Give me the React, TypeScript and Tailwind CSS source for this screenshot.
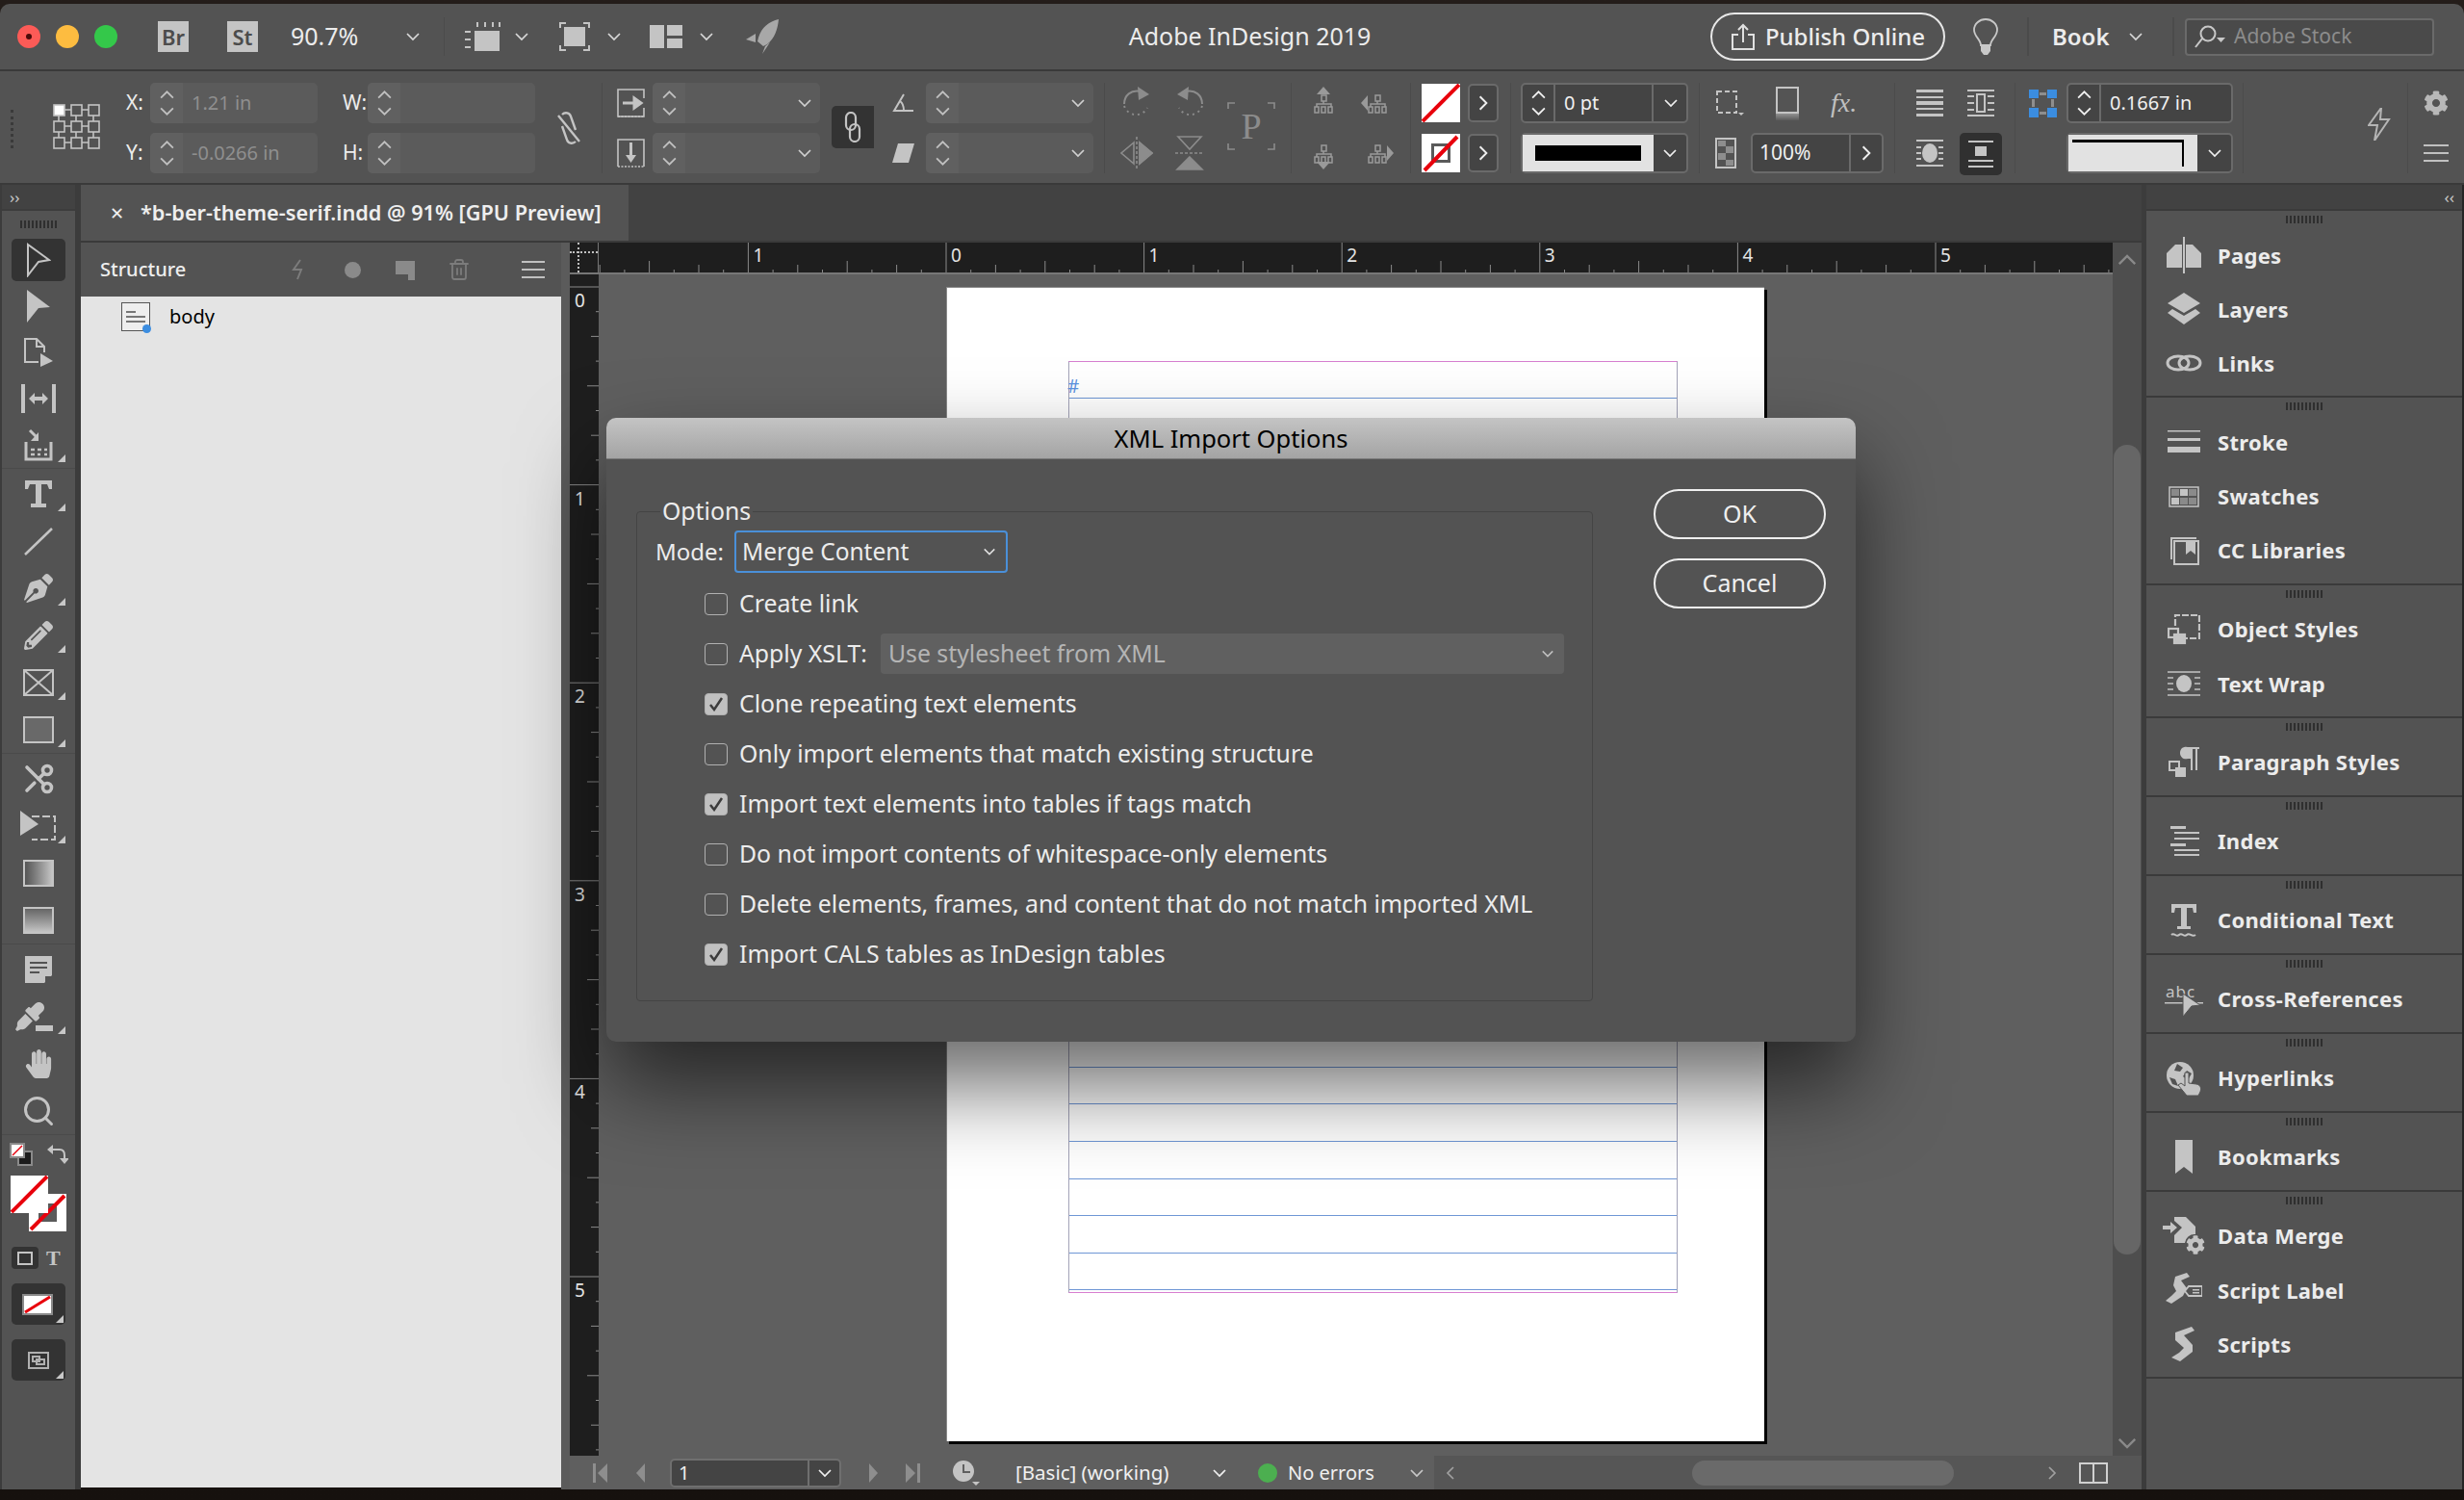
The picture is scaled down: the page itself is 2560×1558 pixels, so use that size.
import React from "react";
import { FaPenNib, FaPencilAlt, FaHandPaper, FaEyeDropper, FaCog } from "react-icons/fa";
import { Scissors, Search, Trash2 } from "lucide-react";

const C = "#c4c4c4";

const Chev = ({ dir = "down", size = 16, color = "#d8d8d8" }: { dir?: string; size?: number; color?: string }) => {
  const pts: Record<string, string> = { down: "2,5 8,11 14,5", up: "2,11 8,5 14,11", right: "5,2 11,8 5,14", left: "11,2 5,8 11,14" };
  return (
    <svg width={size} height={size} viewBox="0 0 16 16" className="shrink-0">
      <polyline points={pts[dir]} fill="none" stroke={color} strokeWidth="1.7" />
    </svg>
  );
};

const Sep = ({ className = "" }: { className?: string }) => <div className={`w-px h-[94px] bg-[#4b4b4b] shrink-0 ${className}`} />;

const Grip = () => (
  <div className="flex justify-center gap-[2px]">
    {Array.from({ length: 10 }).map((_, i) => (
      <span key={i} className="w-[2px] h-[8px] bg-[#2f2f2f]" />
    ))}
  </div>
);

const Flyout = () => <span className="absolute right-[10px] bottom-[6px] w-0 h-0 border-l-[8px] border-l-transparent border-b-[8px] border-b-[#c8c8c8]" />;

const Slash = ({ w, h, sw = 4 }: { w: number; h: number; sw?: number }) => (
  <svg width={w} height={h} viewBox={`0 0 ${w} ${h}`} className="block">
    <rect width={w} height={h} fill="#fff" />
    <line x1="1" y1={h - 1} x2={w - 1} y2="1" stroke="#e8000c" strokeWidth={sw} />
  </svg>
);

// stepper + value field from the control bar
const Field = ({ value, chevron, dim = true, w = "w-[174px]" }: { value?: string; chevron?: boolean; dim?: boolean; w?: string }) => (
  <div className={`${w} h-[42px] rounded-[5px] flex items-center shrink-0 ${dim ? "bg-[#5b5b5b]" : "bg-[#444444] border-2 border-[#6a6a6a]"}`}>
    <div className={`w-[34px] h-full flex flex-col items-center justify-center shrink-0 ${dim ? "bg-[#606060] rounded-l-[5px]" : "border-r-2 border-[#6a6a6a]"}`}>
      <Chev dir="up" size={17} color={dim ? "#c0c0c0" : "#f0f0f0"} />
      <Chev dir="down" size={17} color={dim ? "#c0c0c0" : "#f0f0f0"} />
    </div>
    {value && <span className={`ml-[9px] text-[20px] ${dim ? "text-[#8f8f8f]" : "text-[#f0f0f0]"}`}>{value}</span>}
    {chevron && (
      <span className="ml-auto mr-[8px]">
        <Chev color="#d0d0d0" />
      </span>
    )}
  </div>
);

const FieldLabel = ({ children }: { children: React.ReactNode }) => <div className="h-[42px] flex items-center text-[21px] text-[#ececec]">{children}</div>;

const ArrowBox = () => (
  <div className="w-[32px] h-[40px] rounded-[5px] bg-[#444444] border-2 border-[#6a6a6a] flex items-center justify-center">
    <Chev dir="right" size={18} color="#f0f0f0" />
  </div>
);

const Box = ({ children, className = "" }: { children: React.ReactNode; className?: string }) => (
  <div className={`h-[42px] flex items-center justify-center [&>svg]:shrink-0 ${className}`}>{children}</div>
);

const Ref = () => (
  <svg width="50" height="50" viewBox="0 0 50 50">
    {[3, 20, 37].map((y) =>
      [1, 19, 37].map((x) => <rect key={`${x}${y}`} x={x} y={y} width="11" height="11" fill={x === 1 && y === 3 ? "#fff" : "none"} stroke={C} strokeWidth="1.6" />)
    )}
    <path d="M12 8h7M30 8h7M12 25h7M30 25h7M12 42h7M30 42h7M6 14v6M24 14v6M42 14v6M6 31v6M24 31v6M42 31v6" stroke={C} strokeWidth="1.6" />
  </svg>
);

const Org = ({ arrow }: { arrow: string }) => (
  <svg width="36" height="36" viewBox="0 0 36 36" fill="none" stroke="#9a9a9a" strokeWidth="1.5">
    {arrow === "up" && <path d="M18 1l-7 8h14z" fill="#9a9a9a" stroke="none" />}
    {arrow === "down" && <path d="M18 35l-7-8h14z" fill="#9a9a9a" stroke="none" />}
    {arrow === "left" && <path d="M1 18l7-8v16z" fill="#9a9a9a" stroke="none" />}
    {arrow === "right" && <path d="M35 18l-7-8v16z" fill="#9a9a9a" stroke="none" />}
    <rect x="16" y="10" width="5" height="6" />
    <path d="M18 16v3M11 22v-3h15v3" />
    <rect x="9" y="22" width="4" height="6" />
    <rect x="16" y="22" width="4" height="6" />
    <rect x="23" y="22" width="4" height="6" />
  </svg>
);

const TopBar = () => (
  <div className="h-[68px] flex items-center bg-[#535353] rounded-t-[10px] text-[#ececec]">
    <span className="ml-[18px] w-[24px] h-[24px] rounded-full bg-[#fc5b57] flex items-center justify-center">
      <span className="w-[6px] h-[6px] rounded-full bg-[#4a0c0a]" />
    </span>
    <span className="ml-[16px] w-[24px] h-[24px] rounded-full bg-[#fdbc40]" />
    <span className="ml-[16px] w-[24px] h-[24px] rounded-full bg-[#34c84a]" />
    <span className="ml-[42px] w-[32px] h-[32px] bg-[#c4c4c4] text-[#4c4c4c] text-[22px] font-semibold flex items-center justify-center">Br</span>
    <span className="ml-[40px] w-[32px] h-[32px] bg-[#c4c4c4] text-[#4c4c4c] text-[22px] font-semibold flex items-center justify-center">St</span>
    <span className="ml-[34px] w-[70px] text-[25px] whitespace-nowrap">90.7%</span>
    <span className="ml-[49px]"><Chev /></span>
    <div className="ml-[24px] w-px h-[40px] bg-[#4b4b4b]" />
    <svg className="ml-[21px]" width="38" height="30" viewBox="0 0 38 30" fill={C}>
      <rect x="10" y="9" width="26" height="21" />
      <path d="M0 9h6v2H0zM0 17h6v2H0zM0 25h6v2H0zM12 0h2v5h-2zM20 0h2v5h-2zM28 0h2v5h-2zM35 0h2v5h-2z" />
    </svg>
    <span className="ml-[13px]"><Chev /></span>
    <svg className="ml-[31px]" width="32" height="30" viewBox="0 0 32 30" fill="none" stroke={C} strokeWidth="2">
      <path d="M1 6V1h6M25 1h6v5M31 24v5h-6M7 29H1v-5" />
      <rect x="5" y="5" width="22" height="20" fill={C} stroke="none" />
    </svg>
    <span className="ml-[17px]"><Chev /></span>
    <svg className="ml-[29px]" width="34" height="24" viewBox="0 0 34 24" fill={C}>
      <path d="M0 0h15v24H0zM18 0h16v11H18zM18 14h16v10H18z" />
    </svg>
    <span className="ml-[17px]"><Chev /></span>
    <svg className="ml-[33px]" width="34" height="36" viewBox="0 0 34 36" fill="#a8a8a8">
      <path d="M34 0C24 2 16 9 13 19l-1 4 6 5 4-2C30 20 33 10 34 0zM10 15L0 21l10 3zM20 28l-3 8 8-12z" />
    </svg>
    <span className="ml-[363px] w-[253px] text-[25px] whitespace-nowrap text-center">Adobe InDesign 2019</span>
    <div className="ml-[352px] w-[244px] h-[50px] rounded-full border-2 border-[#e8e8e8] flex items-center justify-center gap-[10px] shrink-0">
      <svg width="26" height="28" viewBox="0 0 26 28" fill="none" stroke="#e0e0e0" strokeWidth="2">
        <path d="M8 12H2v15h22V12h-6M13 20V3M8 7l5-5 5 5" />
      </svg>
      <span className="text-[24px] font-medium whitespace-nowrap">Publish Online</span>
    </div>
    <svg className="ml-[29px] shrink-0" width="26" height="38" viewBox="0 0 26 38" fill="none" stroke="#c8c8c8" strokeWidth="1.800">
      <path d="M8 28C8 22 1 19 1 12a12 11 0 0124 0c0 7-7 10-7 16z" />
      <path d="M8 29h10v5l-3 4h-4l-3-4z" fill="#c8c8c8" stroke="none" />
    </svg>
    <div className="ml-[30px] w-[2px] h-[40px] bg-[#4b4b4b]" />
    <span className="ml-[24px] w-[61px] text-[24px] font-semibold">Book</span>
    <span className="ml-[18px]"><Chev /></span>
    <div className="ml-[30px] w-[2px] h-[40px] bg-[#4b4b4b]" />
    <div className="ml-[11px] w-[259px] h-[39px] rounded-[4px] border-2 border-[#6a6a6a] bg-[#4a4a4a] flex items-center pl-[7px] gap-[8px] shrink-0">
      <svg width="34" height="26" viewBox="0 0 34 26" fill="none" stroke="#c8c8c8" strokeWidth="2">
        <circle cx="15" cy="10" r="7.5" />
        <path d="M9 15l-7 9" />
        <path d="M24 14h9l-4.500 5z" fill="#c8c8c8" stroke="none" />
      </svg>
      <span className="text-[21px] text-[#8c8c8c] whitespace-nowrap">Adobe Stock</span>
    </div>
  </div>
);

const ControlBar = () => (
  <div className="h-[118px] flex items-start pt-[12px] bg-[#535353] border-b-2 border-[#3a3a3a] shrink-0">
    <div className="ml-[11px] mt-[28px] w-[3px] h-[40px] border-l-[3px] border-dotted border-[#3a3a3a]" />
    <div className="ml-[41px] mt-[20px] w-[50px] shrink-0"><Ref /></div>

    <div className="ml-[26px] w-[25px] flex flex-col gap-[10px]">
      <FieldLabel>X:</FieldLabel>
      <FieldLabel>Y:</FieldLabel>
    </div>
    <div className="flex flex-col gap-[10px]">
      <Field value="1.21 in" />
      <Field value="-0.0266 in" />
    </div>
    <div className="ml-[26px] w-[26px] flex flex-col gap-[10px]">
      <FieldLabel>W:</FieldLabel>
      <FieldLabel>H:</FieldLabel>
    </div>
    <div className="flex flex-col gap-[10px]">
      <Field />
      <Field />
    </div>
    <svg className="ml-[20px] mt-[28px] shrink-0" width="30" height="38" viewBox="0 0 30 38" fill="none" stroke={C} strokeWidth="2.400">
      <path d="M8 5c3-3 8-2 9 2l5 14M22 33c-3 3-8 2-9-2L8 17M4 6l22 27" />
    </svg>
    <Sep className="ml-[19px]" />
    <div className="ml-[15px] w-[29px] flex flex-col gap-[10px]">
      <Box>
        <svg width="29" height="30" viewBox="0 0 29 30" fill="none" stroke={C} strokeWidth="1.600">
          <path d="M28 10V1H1v28h27v-9" />
          <path d="M1 29h27" strokeDasharray="2 1.500" />
          <path d="M6 15h12M18 10l7 5-7 5z" fill={C} strokeWidth="3" />
        </svg>
      </Box>
      <Box>
        <svg width="29" height="30" viewBox="0 0 29 30" fill="none" stroke={C} strokeWidth="1.600">
          <path d="M1 29V1h27v28" />
          <path d="M1 29h27" strokeDasharray="2 1.500" />
          <path d="M14.500 4v14" strokeWidth="3" />
          <path d="M9 17h11l-5.500 8z" fill={C} stroke="none" />
        </svg>
      </Box>
    </div>
    <div className="ml-[8px] flex flex-col gap-[10px]">
      <Field chevron />
      <Field chevron />
    </div>
    <div className="ml-[12px] mt-[24px] w-[44px] h-[44px] rounded-l-[5px] bg-[#333333] flex items-center justify-center shrink-0">
      <svg width="18" height="32" viewBox="0 0 18 32" fill="none" stroke={C} strokeWidth="2.200">
        <rect x="2" y="1" width="10" height="18" rx="5" />
        <rect x="6" y="13" width="10" height="18" rx="5" />
      </svg>
    </div>
    <div className="ml-[19px] w-[23px] flex flex-col gap-[10px]">
      <Box>
        <svg width="23" height="20" viewBox="0 0 23 20" fill="none" stroke={C} strokeWidth="2">
          <path d="M12 1L2 18h20M8 8c3 2 4 5 4 10" />
        </svg>
      </Box>
      <Box>
        <svg width="23" height="20" viewBox="0 0 23 20" fill={C}>
          <path d="M6 0h17l-6 20H0z" />
        </svg>
      </Box>
    </div>
    <div className="ml-[12px] flex flex-col gap-[10px]">
      <Field chevron />
      <Field chevron />
    </div>
    <Sep className="ml-[11px]" />
    <div className="ml-[19px] w-[83px] grid grid-cols-[28px_28px] gap-x-[27px] gap-y-[10px]">
      <Box>
        <svg width="34" height="34" viewBox="0 0 34 34" fill="none" stroke="#8c8c8c" strokeWidth="2">
          <path d="M4 18C4 9 11 3 21 5" />
          <path d="M4 20a13 13 0 0024 2" strokeDasharray="2 4" />
          <path d="M18 0l12 8-11 6z" fill="#8c8c8c" stroke="none" />
        </svg>
      </Box>
      <Box>
        <svg width="34" height="34" viewBox="0 0 34 34" fill="none" stroke="#8c8c8c" strokeWidth="2">
          <path d="M30 18C30 9 23 3 13 5" />
          <path d="M30 20a13 13 0 01-24 2" strokeDasharray="2 4" />
          <path d="M16 0L4 8l11 6z" fill="#8c8c8c" stroke="none" />
        </svg>
      </Box>
      <Box>
        <svg width="36" height="34" viewBox="0 0 36 34" fill="none" stroke="#8c8c8c" strokeWidth="1.600">
          <path d="M15 6L2 17l13 11zM21 6l13 11-13 11z" />
          <path d="M21 6l13 11-13 11z" fill="#8c8c8c" />
          <path d="M18 0v34" strokeDasharray="3 2" />
        </svg>
      </Box>
      <Box>
        <svg width="32" height="36" viewBox="0 0 32 36" fill="none" stroke="#8c8c8c" strokeWidth="1.600">
          <path d="M4 1h24L16 14z" />
          <path d="M1 18h30" strokeDasharray="3 2" />
          <path d="M16 22l13 13H3z" fill="#8c8c8c" />
        </svg>
      </Box>
    </div>
    <div className="ml-[25px] mt-[20px] w-[50px] h-[50px] relative flex items-center justify-center shrink-0">
      <svg className="absolute inset-0" width="50" height="50" viewBox="0 0 50 50" fill="none" stroke="#8c8c8c" strokeWidth="1.600">
        <path d="M1 7V1h7M42 1h7v6M49 43v6h-7M8 49H1v-6" />
      </svg>
      <span className="text-[38px] leading-none text-[#8c8c8c] font-['Liberation_Serif',serif]">P</span>
    </div>
    <Sep className="ml-[16px]" />
    <div className="ml-[15px] w-[92px] grid grid-cols-[36px_36px] gap-x-[20px] gap-y-[10px]">
      <Box><Org arrow="up" /></Box>
      <Box><Org arrow="left" /></Box>
      <Box><Org arrow="down" /></Box>
      <Box><Org arrow="right" /></Box>
    </div>
    <Sep className="ml-[16px]" />
    <div className="ml-[11px] w-[40px] flex flex-col gap-[12px] mt-[1px]">
      <Slash w={40} h={40} />
      <div className="relative w-[40px] h-[40px] bg-white">
        <span className="absolute left-[10px] top-[10px] w-[20px] h-[20px] border-[3px] border-[#5a5a5a]" />
        <svg className="absolute inset-0" width="40" height="40" viewBox="0 0 40 40"><line x1="3" y1="38" x2="37" y2="3" stroke="#e8000c" strokeWidth="4" /></svg>
      </div>
    </div>
    <div className="ml-[8px] flex flex-col gap-[12px] mt-[1px]">
      <ArrowBox />
      <ArrowBox />
    </div>
    <Sep className="ml-[12px]" />
    <div className="ml-[10px] flex flex-col gap-[10px]">
      <div className="relative">
        <Field value="0 pt" dim={false} />
        <div className="absolute right-0 top-0 w-[38px] h-[42px] border-l-2 border-[#6a6a6a] flex items-center justify-center">
          <Chev color="#f0f0f0" />
        </div>
      </div>
      <div className="w-[174px] h-[42px] flex rounded-[5px] border-2 border-[#6a6a6a] bg-[#444444]">
        <div className="w-[136px] bg-[#e2e2e2] flex items-center justify-center">
          <span className="w-[110px] h-[16px] bg-black" />
        </div>
        <div className="flex-1 flex items-center justify-center"><Chev color="#f0f0f0" /></div>
      </div>
    </div>
    <Sep className="ml-[11px]" />
    <div className="w-[202px] flex flex-col gap-[10px] shrink-0">
      <div className="h-[42px] flex items-center pl-[16px]">
        <svg width="30" height="28" viewBox="0 0 30 28" fill="none" stroke={C} strokeWidth="2">
          <path d="M2 2h20v22H2z" strokeDasharray="5 3" />
          <path d="M24 24h6l-3 3z" fill={C} stroke="none" />
        </svg>
        <svg className="ml-[30px]" width="30" height="36" viewBox="0 0 30 36">
          <defs>
            <linearGradient id="drop" x1="0" y1="0" x2="0" y2="1">
              <stop offset="0" stopColor="#aaa" />
              <stop offset="1" stopColor="#5a5a5a" />
            </linearGradient>
          </defs>
          <rect x="3" y="26" width="24" height="10" fill="url(#drop)" />
          <rect x="4" y="2" width="22" height="26" fill="#545454" stroke={C} strokeWidth="2" />
        </svg>
        <span className="ml-[30px] text-[28px] italic text-[#c0c0c0] font-['Liberation_Serif',serif] leading-none">fx.</span>
      </div>
      <div className="h-[42px] flex items-center pl-[16px]">
        <svg width="22" height="32" viewBox="0 0 22 32" fill={C}>
          <rect x="1" y="1" width="20" height="30" fill="none" stroke={C} strokeWidth="2" />
          <path d="M3 3h8v6H3zM11 9h8v7h-8zM3 16h8v7H3zM11 23h8v6h-8z" fill="#8e8e8e" />
        </svg>
        <div className="ml-[15px] w-[138px] h-[42px] rounded-[5px] bg-[#444444] border-2 border-[#6a6a6a] flex items-center">
          <span className="pl-[7px] w-[100px] text-[21px] text-[#f0f0f0]">100%</span>
          <span className="flex-1 h-full border-l-2 border-[#6a6a6a] flex items-center justify-center"><Chev dir="right" size={18} color="#f0f0f0" /></span>
        </div>
      </div>
    </div>
    <Sep />
    <div className="ml-[14px] grid grid-cols-[44px_44px] gap-x-[9px] gap-y-[10px] shrink-0">
      <Box>
        <svg width="30" height="28" viewBox="0 0 30 28" fill={C}><path d="M1 0h28v3H1zM1 25h28v3H1z" /><path d="M1 7h28v2H1zM1 12h28v4H1zM1 19h28v2H1z" /></svg>
      </Box>
      <Box>
        <svg width="30" height="28" viewBox="0 0 30 28" fill="none" stroke={C} strokeWidth="2"><path d="M1 1h28M1 27h28M1 7h7M22 7h7M1 14h7M22 14h7M1 21h7M22 21h7" /><rect x="11" y="5" width="8" height="18" /></svg>
      </Box>
      <Box>
        <svg width="30" height="28" viewBox="0 0 30 28" fill={C}><path d="M1 1h28M1 27h28M1 8h5M24 8h5M1 14h5M24 14h5M1 20h5M24 20h5" stroke={C} strokeWidth="2" /><ellipse cx="15" cy="14" rx="8" ry="10" /></svg>
      </Box>
      <div className="h-[44px] rounded-[5px] bg-[#303030] flex items-center justify-center">
        <svg width="28" height="28" viewBox="0 0 28 28" fill={C}><path d="M1 0h26v2H1zM8 6h12v10H8zM1 20h26v2H1zM1 26h26v2H1z" /></svg>
      </div>
    </div>
    <Sep className="ml-[13px]" />
    <div className="ml-[14px] w-[29px] h-[42px] flex items-center shrink-0">
      <svg width="29" height="29" viewBox="0 0 29 29" fill="#8e8e8e">
        <path d="M0 0h10v9H0zM19 0h10v9H19zM0 19h10v10H0zM19 19h10v10H19z" fill="#3b8de0" />
        <path d="M11 3h7v3h-7zM11 23h7v3h-7zM3 10h3v8H3zM23 10h3v8h-3z" />
      </svg>
    </div>
    <div className="ml-[10px] flex flex-col gap-[10px]">
      <Field value="0.1667 in" dim={false} w="w-[173px]" />
      <div className="w-[173px] h-[42px] flex rounded-[5px] border-2 border-[#6a6a6a] bg-[#444444]">
        <div className="w-[134px] bg-[#e2e2e2] relative">
          <span className="absolute left-[4px] right-[14px] top-[5px] h-[3px] bg-black" />
          <span className="absolute right-[14px] top-[5px] bottom-[5px] w-[2px] bg-black" />
        </div>
        <div className="flex-1 flex items-center justify-center"><Chev color="#f0f0f0" /></div>
      </div>
    </div>
    <Sep className="ml-[10px]" />
    <svg className="ml-[129px] mt-[26px] shrink-0" width="24" height="34" viewBox="0 0 24 34" fill="#b5b5b5">
      <path d="M14 0L1 18h9l-3 16 15-22h-9z" fill="none" stroke="#b5b5b5" strokeWidth="2" />
    </svg>
    <Sep className="ml-[17px]" />
    <div className="ml-[14px] w-[30px] flex flex-col gap-[10px] items-center shrink-0">
      <Box><FaCog size={26} color="#b8b8b8" /></Box>
      <Box>
        <span className="w-[26px] flex flex-col gap-[6px]">
          <span className="h-[2px] bg-[#c0c0c0]" />
          <span className="h-[2px] bg-[#c0c0c0]" />
          <span className="h-[2px] bg-[#c0c0c0]" />
        </span>
      </Box>
    </div>
  </div>
);

const tools: { icon: React.ReactNode; fly?: boolean; active?: boolean }[][] = [
  [
    {
      active: true,
      icon: (
        <svg width="26" height="36" viewBox="0 0 26 36" fill="none" stroke={C} strokeWidth="2"><path d="M2 2l22 16-11 2-11 14z" /></svg>
      ),
    },
    { icon: <svg width="26" height="36" viewBox="0 0 26 36" fill={C}><path d="M1 1l24 18-12 1L1 35z" /></svg> },
    {
      icon: (
        <svg width="32" height="32" viewBox="0 0 32 32" fill="none" stroke={C} strokeWidth="2"><path d="M16 26H2V2h12l8 8v6M14 2v8h8" /><path d="M18 17l13 8-13 6z" fill={C} stroke="none" /></svg>
      ),
    },
    {
      icon: (
        <svg width="36" height="30" viewBox="0 0 36 30" fill={C}><path d="M0 0h4v30H0zM32 0h4v30h-4zM8 15l6-6v4h8V9l6 6-6 6v-4h-8v4z" /></svg>
      ),
    },
    {
      fly: true,
      icon: (
        <svg width="30" height="34" viewBox="0 0 30 34" fill="none" stroke={C} strokeWidth="3"><path d="M2 14v18h26V14M6 2l8 8" /><path d="M15 4v9H7z" fill={C} stroke="none" /><path d="M7 22h4M14 22h4M21 22h3M7 27h4M14 27h3M21 27h3" strokeWidth="2.500" /></svg>
      ),
    },
  ],
  [
    { fly: true, icon: <svg width="30" height="30" viewBox="0 0 30 30" fill={C}><path d="M1 1h28v9h-3l-2-5h-6v20h5v4H7v-4h5V5H6l-2 5H1z" /></svg> },
    { icon: <svg width="30" height="30" viewBox="0 0 30 30" stroke={C} strokeWidth="2.500"><path d="M1 29L29 2" /></svg> },
    { fly: true, icon: <FaPenNib size={30} color={C} /> },
    { fly: true, icon: <FaPencilAlt size={30} color={C} /> },
    { fly: true, icon: <svg width="32" height="28" viewBox="0 0 32 28" fill="none" stroke={C} strokeWidth="2"><path d="M1 1h30v26H1zM1 1l30 26M31 1L1 27" /></svg> },
    { fly: true, icon: <svg width="32" height="28" viewBox="0 0 32 28" fill="#696969" stroke={C} strokeWidth="2"><rect x="1" y="1" width="30" height="26" /></svg> },
  ],
  [
    { icon: <Scissors size={36} color={C} strokeWidth={2.4} style={{ transform: "scaleX(-1)" }} /> },
    {
      fly: true,
      icon: (
        <svg width="38" height="32" viewBox="0 0 38 32" fill="none" stroke={C} strokeWidth="2"><path d="M12 6h24v24H12" strokeDasharray="8 3" /><path d="M0 0l19 14L0 26z" fill={C} stroke="none" /></svg>
      ),
    },
    { icon: <span className="block w-[32px] h-[28px] border-2 border-[#c4c4c4] bg-gradient-to-r from-[#555555] to-[#c4c4c4]" /> },
    { icon: <span className="block w-[32px] h-[28px] border-2 border-[#c4c4c4] bg-gradient-to-b from-[#666666] to-[#c4c4c4]" /> },
  ],
  [
    {
      icon: (
        <svg width="28" height="28" viewBox="0 0 28 28" fill={C}>
          <path d="M0 0h28v20l-8 8H0z" />
          <path d="M5 6h18v2H5zM5 11h18v2H5zM5 16h10v2H5z" fill="#535353" />
          <path d="M21 28v-7h7z" fill="#535353" />
        </svg>
      ),
    },
    {
      fly: true,
      icon: (
        <span className="flex items-end -ml-[8px]">
          <FaEyeDropper size={30} color={C} />
          <span className="-ml-[10px] mb-[-1px] w-[20px] h-[8px] border border-[#535353] bg-[#c4c4c4]" />
        </span>
      ),
    },
    { icon: <FaHandPaper size={30} color={C} /> },
    { icon: <Search size={36} color={C} strokeWidth={2} /> },
  ],
];

const LeftTools = () => (
  <div className="w-[84px] shrink-0 bg-[#3c3c3c] flex flex-col">
    <div className="ml-[2px] w-[76px] h-[25px] bg-[#424242] flex items-center pl-[8px] text-[#c8c8c8] text-[17px] leading-none">››</div>
    <div className="ml-[2px] w-[76px] flex-1 mt-[2px] bg-[#535353] flex flex-col">
      <div className="h-[27px] flex items-center justify-center"><Grip /></div>
      {tools.map((group, g) => (
        <div key={g} className="border-b border-[#4a4a4a] mb-px">
          {group.map((t, i) => (
            <div key={i} className={`relative flex items-center justify-center ${g === 0 ? "h-[48px]" : "h-[49px]"}`}>
              {t.active && <span className="absolute left-[10px] top-[2px] w-[56px] h-[44px] rounded-[5px] bg-[#333333]" />}
              <span className="relative">{t.icon}</span>
              {t.fly && <Flyout />}
            </div>
          ))}
        </div>
      ))}
      <div className="mt-[6px] h-[25px] flex items-center pl-[8px]">
        <span className="relative w-[24px] h-[24px] block">
          <span className="absolute right-0 bottom-0 w-[16px] h-[16px] bg-[#1c1c1c] border-2 border-[#8a8a8a]" />
          <span className="absolute left-0 top-0 w-[16px] h-[16px] border-2 border-[#8a8a8a]"><Slash w={12} h={12} sw={1.5} /></span>
        </span>
        <svg className="ml-[15px]" width="22" height="22" viewBox="0 0 22 22" fill="none" stroke={C} strokeWidth="2">
          <path d="M5 6h8c4 0 5 3 5 6v4" />
          <path d="M6 1v10L0 6zM13 15h10l-5 6z" fill={C} stroke="none" />
        </svg>
      </div>
      <div className="relative mt-[10px] ml-[9px] w-[58px] h-[58px]">
        <div className="absolute right-0 bottom-0 w-[39px] h-[39px] bg-white">
          <span className="absolute left-[10px] top-[10px] w-[19px] h-[19px] bg-[#5a5a5a]" />
          <svg className="absolute inset-0" width="39" height="39" viewBox="0 0 39 39"><line x1="2" y1="37" x2="37" y2="2" stroke="#e8000c" strokeWidth="4" /></svg>
        </div>
        <div className="absolute left-0 top-0"><Slash w={39} h={39} sw={4} /></div>
      </div>
      <div className="mt-[16px] ml-[10px] flex items-center">
        <span className="w-[28px] h-[23px] rounded-[4px] bg-[#333333] flex items-center justify-center">
          <span className="w-[16px] h-[14px] border-2 border-[#c4c4c4]" />
        </span>
        <span className="ml-[8px] text-[#c4c4c4] text-[22px] leading-none font-bold font-['Liberation_Serif',serif]">T</span>
      </div>
      <div className="relative mt-[15px] ml-[10px] w-[56px] h-[43px] rounded-[5px] bg-[#333333] flex items-center justify-center">
        <span className="border-2 border-[#8a8a8a] -ml-[2px]"><Slash w={28} h={18} sw={3} /></span>
        <span className="absolute right-[2px] bottom-[2px] w-0 h-0 border-l-[8px] border-l-transparent border-b-[8px] border-b-[#c8c8c8]" />
      </div>
      <div className="relative mt-[15px] ml-[10px] w-[56px] h-[43px] rounded-[5px] bg-[#333333] flex items-center justify-center">
        <svg width="22" height="18" viewBox="0 0 22 18" fill="none" stroke="#b0b0b0" strokeWidth="2"><rect x="1" y="1" width="20" height="16" /><rect x="5" y="5" width="7" height="5" /><rect x="9" y="8" width="8" height="5" /></svg>
        <span className="absolute right-[2px] bottom-[2px] w-0 h-0 border-l-[8px] border-l-transparent border-b-[8px] border-b-[#c8c8c8]" />
      </div>
    </div>
  </div>
);

const StructurePanel = () => (
  <div className="w-[499px] shrink-0 flex flex-col">
    <div className="h-[56px] bg-[#535353] flex items-center pl-[20px] relative">
      <span className="text-[20px] font-medium text-[#eeeeee] w-[197px]">Structure</span>
      <svg width="14" height="22" viewBox="0 0 14 22" fill="none" stroke="#7c7c7c" strokeWidth="2" className="ml-[2px]"><path d="M9 1L2 11h8L6 21" /></svg>
      <span className="ml-[41px] w-[17px] h-[17px] rounded-full bg-[#8a8a8a]" />
      <svg className="ml-[36px]" width="20" height="22" viewBox="0 0 20 22" fill="#8a8a8a"><path d="M0 2h20v20h-7v-6H0z" /></svg>
      <span className="ml-[34px]"><Trash2 size={24} color="#7c7c7c" strokeWidth={1.8} /></span>
      <span className="ml-[53px] w-[24px] flex flex-col gap-[6px]">
        <span className="h-[2px] bg-[#c0c0c0]" />
        <span className="h-[2px] bg-[#c0c0c0]" />
        <span className="h-[2px] bg-[#c0c0c0]" />
      </span>
    </div>
    <div className="flex-1 bg-[#e4e4e4] mb-[2px]">
      <div className="h-[42px] flex items-center pl-[42px]">
        <span className="relative w-[30px] h-[30px] border border-[#555555] bg-[#eeeeee] flex flex-col justify-center gap-[3px] px-[4px]">
          <span className="h-[2px] w-[10px] bg-[#777777]" />
          <span className="h-[2px] bg-[#777777]" />
          <span className="h-[2px] bg-[#777777]" />
          <span className="absolute -right-[2px] -bottom-[3px] w-[9px] h-[9px] rounded-full bg-[#3b8de0]" />
        </span>
        <span className="ml-[20px] text-[20px] text-black">body</span>
      </div>
    </div>
  </div>
);

const INCH = 205.6;
const hTicks = Array.from({ length: 62 }, (_, i) => i - 14);
const vTicks = Array.from({ length: 48 }, (_, i) => i);
const tickLen = (i: number, full: number) => (i % 8 === 0 ? full : i % 4 === 0 ? 12 : i % 2 === 0 ? 8 : 3);

const HRuler = () => (
  <div className="relative w-[1573px] h-[31px] bg-[#1e1e1e] overflow-hidden">
    <svg className="absolute inset-0" width="1573" height="31">
      {hTicks.map((i) => {
        const x = 361 + (i * INCH) / 8;
        return <line key={i} x1={x} x2={x} y1={31 - tickLen(i, 31)} y2="31" stroke="#8a8a8a" />;
      })}
    </svg>
    {[-1, 0, 1, 2, 3, 4, 5].map((n) => (
      <span key={n} className="absolute top-[-1px] text-[19px] text-[#e4e4e4]" style={{ left: 361 + n * INCH + 5 }}>
        {Math.abs(n)}
      </span>
    ))}
  </div>
);

const VRuler = () => (
  <div className="relative w-[30px] h-full bg-[#1e1e1e] overflow-hidden shrink-0">
    <svg className="absolute inset-0" width="30" height="1230">
      {vTicks.map((i) => {
        const y = 13 + (i * INCH) / 8;
        return <line key={i} y1={y} y2={y} x1={30 - tickLen(i, 30)} x2="30" stroke="#8a8a8a" />;
      })}
    </svg>
    {[0, 1, 2, 3, 4, 5].map((n) => (
      <span key={n} className="absolute left-[5px] text-[19px] text-[#e4e4e4]" style={{ top: 13 + n * INCH }}>
        {n}
      </span>
    ))}
  </div>
);

const Canvas = () => (
  <div className="relative flex-1 bg-[#5f5f5f] overflow-hidden">
    <div className="absolute left-[361px] top-[13px] w-[850px] h-[1199px] bg-white border-l border-t border-[#8a8a8a] shadow-[3px_3px_0_#000]">
      <div className="absolute left-[126px] top-[76px] w-[633px] h-[968px] border-x border-x-[#a3a3b8] border-y border-y-[#d77fd0]">
        <span className="absolute -left-[2px] top-[14px] text-[19px] leading-[22px] text-[#5d93e0]">#</span>
        {Array.from({ length: 25 }).map((_, i) => (
          <span key={i} className="absolute left-0 right-0 h-px bg-[#6f97d6]" style={{ top: 37 + i * 38.6 }} />
        ))}
      </div>
    </div>
  </div>
);

const ScrollCol = () => (
  <div className="w-[30px] shrink-0 bg-[#4e4e4e] relative flex flex-col items-center pt-[7px]">
    <Chev dir="up" size={22} color="#8a8a8a" />
    <div className="mt-[181px] w-[28px] h-[841px] rounded-full bg-[#666666]" />
    <div className="absolute bottom-[2px]"><Chev dir="down" size={22} color="#8a8a8a" /></div>
  </div>
);

const StatusBar = () => (
  <div className="h-[35px] flex items-center bg-[#5f5f5f] text-[#f0f0f0] shrink-0">
    <svg className="ml-[24px]" width="16" height="20" viewBox="0 0 16 20" fill="#8e8e8e"><path d="M0 0h3v20H0zM15 0v20L5 10z" /></svg>
    <svg className="ml-[27px]" width="12" height="20" viewBox="0 0 12 20" fill="#8e8e8e"><path d="M11 0v20L2 10z" /></svg>
    <div className="ml-[25px] w-[178px] h-[30px] rounded-[5px] border-2 border-[#6f6f6f] bg-[#444444] flex items-center shrink-0">
      <span className="pl-[7px] w-[141px] text-[20px]">1</span>
      <span className="flex-1 h-full border-l-2 border-[#6f6f6f] flex items-center justify-center"><Chev color="#f0f0f0" /></span>
    </div>
    <svg className="ml-[28px]" width="12" height="20" viewBox="0 0 12 20" fill="#8e8e8e"><path d="M1 0v20l9-10z" /></svg>
    <svg className="ml-[26px]" width="16" height="20" viewBox="0 0 16 20" fill="#8e8e8e"><path d="M13 0h3v20h-3zM1 0v20l10-10z" /></svg>
    <svg className="ml-[34px]" width="28" height="28" viewBox="0 0 28 28">
      <circle cx="11" cy="12" r="11" fill="#c4c4c4" />
      <path d="M11 5v8h7" fill="none" stroke="#5f5f5f" strokeWidth="2" />
      <path d="M20 23h8l-4 4z" fill="#c4c4c4" />
    </svg>
    <span className="ml-[37px] w-[157px] text-[20.5px] whitespace-nowrap">[Basic] (working)</span>
    <span className="ml-[47px]"><Chev color="#f0f0f0" /></span>
    <span className="ml-[32px] w-[20px] h-[20px] rounded-full bg-[#4caf50] shrink-0" />
    <span className="ml-[11px] w-[91px] text-[20px] whitespace-nowrap">No errors</span>
    <span className="ml-[35px]"><Chev color="#c8c8c8" /></span>
    <div className="ml-[10px] flex-1 h-full bg-[#565656] flex items-center">
      <span className="ml-[9px]"><Chev dir="left" size={16} color="#a0a0a0" /></span>
      <span className="ml-[243px] w-[272px] h-[26px] rounded-full bg-[#6a6a6a]" />
      <span className="ml-[94px]"><Chev dir="right" size={16} color="#a0a0a0" /></span>
      <svg className="ml-[20px]" width="30" height="22" viewBox="0 0 30 22" fill="none" stroke="#d0d0d0" strokeWidth="2"><path d="M1 1h28v20H1zM15 1v20" /></svg>
    </div>
  </div>
);

const ic = {
  pages: <svg width="36" height="38" viewBox="0 0 36 38" fill={C}><path d="M17 0h2v38h-2zM0 17l9-9h7v24H0zM20 8h7l9 9v15H20z" /></svg>,
  layers: <svg width="36" height="34" viewBox="0 0 36 34" fill={C}><path d="M18 0l17 11-17 10L1 11zM6 17l12 7 12-7 5 4-17 12L1 21z" /></svg>,
  links: <svg width="38" height="20" viewBox="0 0 38 20" fill="none" stroke={C} strokeWidth="3"><ellipse cx="13" cy="10" rx="11" ry="7" /><ellipse cx="25" cy="10" rx="11" ry="7" /></svg>,
  stroke: <svg width="34" height="24" viewBox="0 0 34 24" fill={C}><path d="M0 0h34v1.500H0zM0 8h34v3H0zM0 17h34v6H0z" /></svg>,
  swatches: <svg width="32" height="22" viewBox="0 0 32 22" fill="#a8a8a8" stroke={C} strokeWidth="1.500"><path d="M1 1h30v20H1z" fill="none" /><path d="M3 3h8v7H3zM21 3h8v7h-8zM12 12h8v7h-8zM21 12h8v7h-8z" fill="#8a8a8a" stroke="none" /><path d="M12 3h8v7h-8zM3 12h8v7H3z" fill={C} stroke="none" /></svg>,
  cc: <svg width="32" height="30" viewBox="0 0 32 30" fill="none" stroke={C} strokeWidth="2"><path d="M3 24V2h26" /><rect x="6" y="5" width="25" height="24" /><path d="M18 5h10v14l-5-4-5 4z" fill={C} stroke="none" /></svg>,
  obj: <svg width="34" height="32" viewBox="0 0 34 32" fill="none" stroke={C} strokeWidth="2.200"><path d="M8 12V1h25v24H18" strokeDasharray="7 2" /><rect x="1" y="15" width="10" height="9" /><rect x="7" y="21" width="11" height="9" fill={C} /></svg>,
  wrap: <svg width="34" height="26" viewBox="0 0 34 26" stroke={C} strokeWidth="1.600" fill={C}><path d="M0 1h34M0 25h34M0 7h6M28 7h6M0 13h6M28 13h6M0 19h6M28 19h6" /><ellipse cx="17" cy="13" rx="8" ry="9" stroke="none" /></svg>,
  para: <svg width="32" height="34" viewBox="0 0 32 34" fill={C}><path d="M12 1h20v2h-2v22h-2V3h-3v22h-2V13h-3a6 6 0 01-8-6 6 6 0 018-6z" /><rect x="1" y="16" width="10" height="9" fill="none" stroke={C} strokeWidth="2" /><rect x="7" y="22" width="11" height="10" /></svg>,
  index: <svg width="32" height="32" viewBox="0 0 32 32" fill={C}><path d="M2 0h16v3H2zM6 6h26v2H6zM6 12h26v2H6zM2 18h16v3H2zM6 24h26v2H6zM6 29h26v2H6z" /></svg>,
  cond: <svg width="28" height="36" viewBox="0 0 28 36" fill={C}><path d="M1 1h26v9h-3l-1-5h-6v19h4v3H7v-3h4V5H5l-1 5H1z" /><path d="M1 33c3-3 5 3 8 0s5 3 8 0 5 3 9 0" fill="none" stroke={C} strokeWidth="2" /></svg>,
  xref: (
    <svg width="40" height="36" viewBox="0 0 40 36" fill={C}>
      <text x="1" y="16" fontSize="17" fontFamily="Noto Sans, sans-serif" letterSpacing="1">abc</text>
      <path d="M0 21h40v1.500H0z" />
      <path d="M19 12l18 12-9 1-9 11z" stroke="#535353" strokeWidth="1" />
    </svg>
  ),
  hyper: (
    <svg width="38" height="36" viewBox="0 0 38 36" fill={C}>
      <circle cx="15" cy="15" r="14" />
      <path d="M12 3l6 4-3 4-6-1zM22 10l5 3-4 7-5-4zM4 17l6 2 3 7-6-2z" fill="#535353" />
      <path d="M20 12h4v11l8 1c5 1 5 5 4 8l-2 4H22l-9-11 3-2 4 3z" stroke="#535353" strokeWidth="1" />
    </svg>
  ),
  book: <svg width="20" height="36" viewBox="0 0 20 36" fill={C}><path d="M1 0h18v35l-9-7-9 7z" /></svg>,
  merge: (
    <svg width="44" height="40" viewBox="0 0 44 40" fill={C}>
      <path d="M0 9h8V5l7 6-7 6v-4H0zM12 0h12l10 10v8a10 10 0 00-11 9H12v-8l8-8-8-7z" />
      <g transform="translate(24 19)"><FaCog size={20} color={C} /></g>
    </svg>
  ),
  label: (
    <svg width="38" height="36" viewBox="0 0 38 36" fill={C}>
      <path d="M10 4l12-4 3 4-9 4 6 8-4 8-12 8-6-3 6-5 5-5-3-6z" />
      <path d="M24 14h14v10H24l-4-5z" fill="none" stroke={C} strokeWidth="1.800" />
      <path d="M28 17h7v1.500h-7zM28 20h7v1.500h-7z" />
    </svg>
  ),
  scripts: <svg width="26" height="36" viewBox="0 0 26 36" fill={C}><path d="M4 6l17-6 3 4-11 5 9 10v7l-13 10-9-4 8-5 5-5-9-8z" /></svg>,
};

const panelGroups: { icon: React.ReactNode; label: string }[][] = [
  [{ icon: ic.pages, label: "Pages" }, { icon: ic.layers, label: "Layers" }, { icon: ic.links, label: "Links" }],
  [{ icon: ic.stroke, label: "Stroke" }, { icon: ic.swatches, label: "Swatches" }, { icon: ic.cc, label: "CC Libraries" }],
  [{ icon: ic.obj, label: "Object Styles" }, { icon: ic.wrap, label: "Text Wrap" }],
  [{ icon: ic.para, label: "Paragraph Styles" }],
  [{ icon: ic.index, label: "Index" }],
  [{ icon: ic.cond, label: "Conditional Text" }],
  [{ icon: ic.xref, label: "Cross-References" }],
  [{ icon: ic.hyper, label: "Hyperlinks" }],
  [{ icon: ic.book, label: "Bookmarks" }],
  [{ icon: ic.merge, label: "Data Merge" }, { icon: ic.label, label: "Script Label" }, { icon: ic.scripts, label: "Scripts" }],
];

const RightPanel = () => (
  <div className="w-[335px] shrink-0 border-l-[5px] border-[#3c3c3c] flex flex-col pr-[2px] bg-[#242424]">
    <div className="h-[25px] bg-[#424242] flex items-center justify-end pr-[8px] text-[#c8c8c8] text-[17px] leading-none border-b-2 border-[#3a3a3a] box-content shrink-0">‹‹</div>
    <div className="flex-1 bg-[#535353]">
      {panelGroups.map((group, g) => (
        <div key={g} className="border-b-2 border-[#3a3a3a] pt-[3px] pb-[5.800px]">
          <div className="h-[15px] flex items-start pt-[2px]"><div className="w-full"><Grip /></div></div>
          {group.map((it) => (
            <div key={it.label} className="h-[56.200px] flex items-center">
              <span className="w-[74px] flex justify-center pl-[4px] shrink-0">{it.icon}</span>
              <span className="text-[22px] font-bold tracking-[0.3px] text-[#ececec] whitespace-nowrap">{it.label}</span>
            </div>
          ))}
        </div>
      ))}
    </div>
  </div>
);

const Check = ({ on }: { on?: boolean }) => (
  <span className={`w-[24px] h-[23px] rounded-[4px] border border-[#b0b0b0] flex items-center justify-center shrink-0 ${on ? "bg-[#c0c0c0]" : ""}`}>
    {on && (
      <svg width="16" height="16" viewBox="0 0 16 16" fill="none" stroke="#3c3c3c" strokeWidth="2.500"><path d="M2 9l4 5 8-12" /></svg>
    )}
  </span>
);

const options = [
  { label: "Create link" },
  { label: "Apply XSLT:", xslt: true },
  { label: "Clone repeating text elements", on: true },
  { label: "Only import elements that match existing structure" },
  { label: "Import text elements into tables if tags match", on: true },
  { label: "Do not import contents of whitespace-only elements" },
  { label: "Delete elements, frames, and content that do not match imported XML" },
  { label: "Import CALS tables as InDesign tables", on: true },
];

const Dialog = () => (
  <div className="absolute left-[630px] top-[434px] w-[1298px] h-[648px] rounded-[10px] bg-[#535353] shadow-[0_45px_90px_rgba(0,0,0,0.6)] flex flex-col overflow-hidden">
    <div className="h-[43px] shrink-0 bg-gradient-to-b from-[#c4c4c4] to-[#a4a4a4] border-b border-[#7a7a7a] flex items-center justify-center text-[25.5px] text-black">XML Import Options</div>
    <div className="flex items-start pl-[31px] pt-[31px]">
      <fieldset className="mt-[8px] w-[994px] h-[524px] border border-[#444444] rounded-[4px] shrink-0 pl-[19px]">
        <legend className="ml-[5px] px-[2px] h-[30px] leading-[28px] text-[24.8px] text-[#ececec]">Options</legend>
        <div className="mt-[5px] h-[44px] flex items-center">
          <span className="w-[82px] text-[24px] text-[#ececec]">Mode:</span>
          <div className="w-[284px] h-[44px] rounded-[4px] border-2 border-[#4a90d9] flex items-center pl-[6px] pr-[10px] justify-between">
            <span className="text-[24.5px] text-[#ececec]">Merge Content</span>
            <Chev size={14} color="#e0e0e0" />
          </div>
        </div>
        <div className="pl-[51px] mt-[6px]">
          {options.map((o) => (
            <div key={o.label} className="h-[52px] flex items-center">
              <Check on={o.on} />
              <span className="ml-[12px] text-[24.8px] text-[#ececec] whitespace-nowrap">{o.label}</span>
              {o.xslt && (
                <div className="ml-[14px] w-[710px] h-[42px] rounded-[4px] bg-[#606060] flex items-center justify-between pl-[8px] pr-[10px]">
                  <span className="text-[24.8px] text-[#b4b4b4]">Use stylesheet from XML</span>
                  <Chev size={14} color="#c0c0c0" />
                </div>
              )}
            </div>
          ))}
        </div>
      </fieldset>
      <div className="ml-[63px] w-[179px] flex flex-col gap-[20px] shrink-0">
        <button className="h-[52px] rounded-full border-2 border-[#efefef] text-[25px] text-[#efefef]">OK</button>
        <button className="h-[52px] rounded-full border-2 border-[#efefef] text-[25px] text-[#efefef]">Cancel</button>
      </div>
    </div>
  </div>
);

export default function App() {
  return (
    <div className="relative w-[2560px] h-[1558px] overflow-hidden bg-gradient-to-b from-[#241d1a] to-[#16110e] pt-[4px] flex flex-col font-['Noto_Sans',sans-serif]">
      <TopBar />
      <div className="h-[2px] bg-[#3a3a3a] shrink-0" />
      <ControlBar />
      <div className="flex h-[1355px] shrink-0">
        <LeftTools />
        <div className="w-[2141px] shrink-0 flex flex-col">
          <div className="h-[58px] bg-[#424242] border-b-2 border-[#3a3a3a] box-content flex shrink-0">
            <div className="w-[569px] bg-[#535353] flex items-center pl-[30px] text-[#eeeeee]">
              <span className="text-[18px] w-[32px]">✕</span>
              <span className="text-[21.7px] font-semibold whitespace-nowrap">*b-ber-theme-serif.indd @ 91% [GPU Preview]</span>
            </div>
          </div>
          <div className="flex-1 flex min-h-0">
            <StructurePanel />
            <div className="w-[9px] bg-[#5b5b5b] shrink-0" />
            <div className="w-[1633px] flex flex-col">
              <div className="flex-1 flex min-h-0">
                <div className="w-[1603px] flex flex-col">
                  <div className="flex h-[33px] shrink-0 border-b-2 border-[#777777]">
                    <div className="w-[30px] h-[31px] bg-[#1e1e1e] relative border-r border-[#777777] shrink-0">
                      <span className="absolute left-0 right-0 top-[9px] border-t-2 border-dotted border-[#c0c0c0]" />
                      <span className="absolute top-0 bottom-0 left-[8px] border-l-2 border-dotted border-[#c0c0c0]" />
                    </div>
                    <HRuler />
                  </div>
                  <div className="flex-1 flex min-h-0">
                    <VRuler />
                    <Canvas />
                  </div>
                </div>
                <ScrollCol />
              </div>
              <StatusBar />
            </div>
          </div>
        </div>
        <RightPanel />
      </div>
      <Dialog />
    </div>
  );
}
